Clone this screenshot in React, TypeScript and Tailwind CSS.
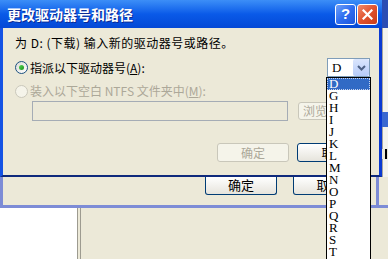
import React from "react";
import clsx from "clsx";

const cjk = "font-['Noto_Sans_CJK_SC','Noto_Sans_CJK_JP',sans-serif]";

const Radio = ({ checked, disabled }: { checked?: boolean; disabled?: boolean }) => (
  <span
    className={clsx(
      "flex items-center justify-center w-[13px] h-[13px] rounded-full border shrink-0",
      disabled
        ? "border-[#cac8bb] bg-[#f5f4ea]"
        : "border-[#1c5180] bg-gradient-to-br from-[#dcdcd7] to-white"
    )}
  >
    {checked && (
      <span className="w-[5px] h-[5px] rounded-full bg-gradient-to-br from-[#55d455] to-[#159515]" />
    )}
  </span>
);

const XpButton = (props: {
  children: React.ReactNode;
  disabled?: boolean;
  className?: string;
}) => (
  <div
    className={clsx(
      "flex items-center justify-center border text-[12px] leading-none",
      props.disabled
        ? "border-[#c9c7ba] bg-[#f5f4ea] text-[#aca899]"
        : "border-[#003c74] bg-gradient-to-b from-white to-[#e6e4dc] text-black",
      props.className
    )}
  >
    {props.children}
  </div>
);

const letters = ["D", "G", "H", "I", "J", "K", "L", "M", "N", "O", "P", "Q", "R", "S", "T"];

export default function App() {
  return (
    <div className={clsx("relative w-[388px] h-[259px] overflow-hidden bg-[#ece9d8] flex flex-col", cjk)}>
      {/* active dialog + sliver of what lies to its right */}
      <div className="flex h-[177px]">
        <div className="w-[382px] flex flex-col">
          <div className="h-[28px] flex items-center pl-[7px] pr-[4px] bg-gradient-to-b from-[#3c8ef7] via-[#0a5ae8] to-[#0448d6]">
            <span className="flex-1 text-white text-[14px] font-bold [text-shadow:1px_1px_0_#0b2a94]">
              更改驱动器号和路径
            </span>
            <div className="flex gap-[1px]">
              <div className="w-[21px] h-[21px] rounded-[3px] border border-white bg-gradient-to-br from-[#6fa0f8] via-[#2f6df0] to-[#1c55dc] flex items-center justify-center text-white text-[15px] font-bold font-['Liberation_Sans',sans-serif]">
                ?
              </div>
              <div className="w-[21px] h-[21px] rounded-[3px] border border-white bg-gradient-to-br from-[#f08a6a] via-[#e0522e] to-[#c83c18] flex items-center justify-center">
                <svg width="11" height="11" viewBox="0 0 11 11">
                  <path d="M1.5 1.5 L9.5 9.5 M9.5 1.5 L1.5 9.5" stroke="white" strokeWidth="2.2" strokeLinecap="square" />
                </svg>
              </div>
            </div>
          </div>
          <div className="flex-1 flex flex-col border-l-[3px] border-r-[3px] border-b-2 border-l-[#1553e4] border-r-[#0b3ad2] border-b-[#0f2a7c] pl-[12px] pr-[9px] pt-[7px] text-[12px] text-black">
            <div className="h-[16px] leading-[16px] tracking-[0.5px]">为 D: (下载) 输入新的驱动器号或路径。</div>
            <div className="mt-[7px] h-[19px] flex items-center justify-between">
              <div className="flex items-center gap-[2px]">
                <Radio checked />
                <span className="leading-[16px]">
                  指派以下驱动器号(<span className="underline">A</span>):
                </span>
              </div>
              <div className="w-[43px] h-[19px] border border-[#7f9db9] bg-white flex items-center">
                <span className="flex-1 pl-[4px] text-[13px] leading-none font-['Liberation_Serif',serif]">D</span>
                <div className="w-[16px] h-[17px] rounded-[2px] bg-gradient-to-b from-[#dbe6fd] to-[#b6cbf8] flex items-center justify-center">
                  <svg width="9" height="6" viewBox="0 0 9 6">
                    <path d="M1 1 L4.5 4.5 L8 1" stroke="#4d6185" strokeWidth="2" fill="none" />
                  </svg>
                </div>
              </div>
            </div>
            <div className="mt-[6px] h-[16px] flex items-center gap-[2px] text-[#aca899]">
              <Radio disabled />
              <span className="leading-[16px]">
                装入以下空白 NTFS 文件夹中(<span className="underline">M</span>):
              </span>
            </div>
            <div className="mt-[2px] flex items-start">
              <div className="ml-[17px] w-[256px] h-[20px] border border-[#a5acb5] bg-[#ece9d8]" />
              <XpButton disabled className="ml-[10px] mt-[1px] w-[72px] h-[18px] rounded-[3px] justify-start pl-[4px]">
                浏览...
              </XpButton>
            </div>
            <div className="mt-[22px] flex justify-end gap-[8px]">
              <XpButton disabled className="w-[72px] h-[19px] rounded-[3px]">确定</XpButton>
              <XpButton className="w-[73px] h-[19px] rounded-[3px]">取消</XpButton>
            </div>
          </div>
        </div>
        <div className="flex-1 flex flex-col">
          <div className="h-[28px] bg-[#2a4cb4]" />
          <div className="h-[84px] bg-[#f4f3ee] border-l border-[#a7a6a0]" />
          <div className="h-[15px] bg-[#3a68d0]" />
          <div className="h-[22px] bg-[#f4f3ee] border-l border-[#a7a6a0]" />
          <div className="h-[10px] w-[2px] ml-[3px] bg-black" />
          <div className="flex-1 bg-[#f4f3ee] border-l border-[#a7a6a0]" />
        </div>
      </div>

      {/* inactive dialog behind */}
      <div className="h-[31px] flex border-l-[3px] border-b-[3px] border-[#7d8cd6]">
        <div className="w-[376px] flex items-start gap-[16px] pl-[202px] border-r-[3px] border-[#7d8cd6]">
          <XpButton className="w-[72px] h-[18px] border-t-0 rounded-b-[3px] pb-[2px] text-[13px]">确定</XpButton>
          <XpButton className="w-[73px] h-[18px] border-t-0 rounded-b-[3px] pb-[2px] text-[13px]">取消</XpButton>
        </div>
        <div className="flex-1" />
      </div>

      {/* window further back */}
      <div className="flex-1 flex">
        <div className="w-[77px] bg-white" />
        <div className="w-[4px] border-l border-r border-[#9d9b90] bg-[#ece9d8]" />
        <div className="flex-1 bg-[#ece9d8]" />
      </div>

      {/* open drop-down list */}
      <div className="absolute left-[326px] top-[77px] w-[45px] h-[190px] border border-black bg-white">
        {letters.map((l, i) => (
          <div
            key={l}
            className={clsx(
              "h-[12px] pl-[2px] flex items-center text-[13px] leading-[12px] font-['Liberation_Serif',serif]",
              i === 0 ? "bg-[#316ac5] text-white outline-1 outline-dotted outline-[#c8d4ee] -outline-offset-1" : "text-black"
            )}
          >
            {l}
          </div>
        ))}
      </div>
    </div>
  );
}
